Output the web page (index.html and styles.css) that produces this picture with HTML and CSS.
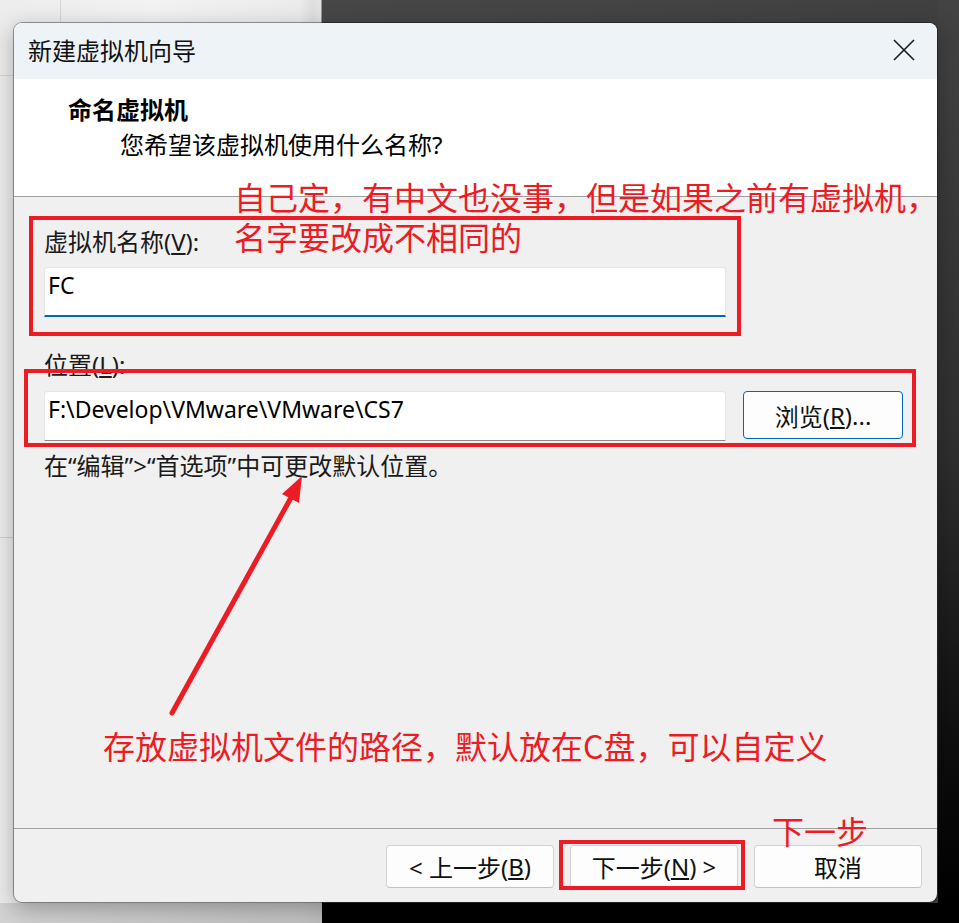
FILE: index.html
```html
<!DOCTYPE html>
<html lang="zh-CN">
<head>
<meta charset="utf-8">
<title>新建虚拟机向导</title>
<link rel="stylesheet" href="styles.css">
</head>
<body>
<div class="dialog">
  <div class="titlebar">
    <span class="title">新建虚拟机向导</span>
    <svg class="close" width="22" height="22" viewBox="0 0 22 22"><path d="M1 1 L21 21 M21 1 L1 21" stroke="#1a1a1a" stroke-width="1.6" fill="none"/></svg>
  </div>
  <div class="header">
    <div class="h-title">命名虚拟机</div>
    <div class="h-sub">您希望该虚拟机使用什么名称?</div>
  </div>
  <div class="content">
    <div class="label">虚拟机名称(<u>V</u>):</div>
    <div class="input focused">FC</div>
    <div class="label label2">位置(<u>L</u>):</div>
    <div class="row">
      <div class="input">F:\Develop\VMware\VMware\CS7</div>
      <div class="btn browse">浏览(<u>R</u>)...</div>
    </div>
    <div class="hint">在“编辑”&gt;“首选项”中可更改默认位置。</div>
  </div>
  <div class="footer">
    <div class="btn">&lt; 上一步(<u>B</u>)</div>
    <div class="btn">下一步(<u>N</u>) &gt;</div>
    <div class="btn">取消</div>
  </div>
</div>

<div class="ann ann1">自己定，有中文也没事，但是如果之前有虚拟机，<br>名字要改成不相同的</div>
<div class="ann ann2">存放虚拟机文件的路径，默认放在C盘，可以自定义</div>
<div class="ann ann3">下一步</div>
<div class="box box1"></div>
<div class="box box2"></div>
<div class="box box3"></div>
<svg class="arrow" width="959" height="923" viewBox="0 0 959 923">
  <line x1="172" y1="713" x2="293" y2="494" stroke="#ed1c24" stroke-width="5" stroke-linecap="round"/>
  <polygon points="302,476 299,503 282,494" fill="#ed1c24"/>
</svg>
</body>
</html>
```
FILE: styles.css
```css
html, body {
  margin: 0;
  padding: 0;
}
body {
  width: 959px;
  height: 923px;
  overflow: hidden;
  position: relative;
  font-family: "Noto Sans", "Noto Sans CJK SC", sans-serif;
  color: #111;
  background:
    linear-gradient(to right, #d2d2d2, #c2c2c2 300px, #bdbdbd 322px, #000 322px) 0 903px / 100% 20px no-repeat,
    linear-gradient(#d6d6d6, #d6d6d6) 60px 0 / 1px 22px no-repeat,
    linear-gradient(#c8c8c8, #c8c8c8) 60px 903px / 1px 20px no-repeat,
    linear-gradient(#d6d6d6, #d6d6d6) 0 75px / 13px 1px no-repeat,
    linear-gradient(#d0d0d0, #d0d0d0) 0 537px / 13px 1px no-repeat,
    linear-gradient(#434343, #2e2e2e 50%, #0a0a0a 85%, #000) 938px 0 / 21px 100% no-repeat,
    linear-gradient(to right, #ececec 0, #f2f2f2 150px, #ebebeb 300px, #dedede 312px, #e4e4e4 321px, #474747 322px, #404040 100%);
}

.dialog {
  margin: 22px 0 0 13px;
  width: 925px;
  height: 881px;
  box-sizing: border-box;
  border: 1px solid rgba(0, 0, 0, 0.36);
  border-radius: 9px;
  background: #f0f0f0;
  background-clip: padding-box;
  box-shadow: 0 6px 22px rgba(0, 0, 0, 0.28);
  display: flex;
  flex-direction: column;
  overflow: hidden;
}

.titlebar {
  height: 56px;
  flex: none;
  background: #eef3f8;
  display: flex;
  align-items: center;
  justify-content: space-between;
  padding: 0 22px 0 14px;
}
.title {
  font-size: 24px;
  line-height: 32px;
  color: #111;
}
.close {
  display: block;
  margin-top: -2px;
}

.header {
  height: 118px;
  flex: none;
  background: #fff;
  border-bottom: 1px solid #a0a0a0;
  padding: 14px 0 0 54px;
  box-sizing: border-box;
}
.h-title {
  font-family: "Noto Sans CJK SC", sans-serif;
  font-weight: 700;
  font-size: 24px;
  line-height: 32px;
  color: #000;
}
.h-sub {
  margin-top: 4px;
  padding-left: 52px;
  font-size: 24px;
  line-height: 32px;
  color: #000;
}

.content {
  flex: 1;
  padding: 29px 0 0 30px;
  display: flex;
  flex-direction: column;
  align-items: flex-start;
}
.label {
  font-size: 24px;
  line-height: 32px;
  color: #1a1a1a;
}
.label2 {
  margin-top: 32px;
}
.input {
  margin-top: 9px;
  width: 682px;
  height: 50px;
  box-sizing: border-box;
  background: #fff;
  border: 1px solid #e6e6e6;
  border-bottom: 1px solid #8a8a8a;
  border-radius: 3px 3px 0 0;
  padding: 1px 3px 0;
  font-size: 23px;
  line-height: 32px;
  color: #000;
}
.input.focused {
  border-bottom: 2px solid #0067c0;
}
.row {
  display: flex;
  align-items: flex-start;
  gap: 17px;
  margin-top: 10px;
}
.row .input {
  margin-top: 0;
}
.hint {
  margin-top: 9px;
  font-size: 24px;
  line-height: 32px;
  color: #1a1a1a;
}

.btn {
  width: 168px;
  height: 43px;
  box-sizing: border-box;
  background: #fdfdfd;
  border: 1px solid #d2d2d2;
  border-bottom-color: #c2c2c2;
  border-radius: 4px;
  display: flex;
  align-items: center;
  justify-content: center;
  font-size: 24px;
  color: #111;
}
.btn.browse {
  width: 160px;
  height: 48px;
  border: 1px solid #0067c0;
}

.footer {
  height: 74px;
  flex: none;
  box-sizing: border-box;
  border-top: 1px solid #a0a0a0;
  padding: 16px 15px 0 0;
  display: flex;
  justify-content: flex-end;
  gap: 16px;
}

.ann {
  position: absolute;
  color: #ed1c24;
  font-family: "Noto Sans CJK SC", sans-serif;
  font-size: 32px;
  line-height: 40px;
  white-space: nowrap;
}
.ann1 { left: 234px; top: 176px; }
.ann2 { left: 103px; top: 725px; }
.ann3 { left: 772px; top: 810px; }

.box {
  position: absolute;
  border: 4px solid #ed1c24;
  box-sizing: border-box;
}
.box1 { left: 29px; top: 216px; width: 712px; height: 120px; }
.box2 { left: 24px; top: 369px; width: 892px; height: 78px; }
.box3 { left: 559px; top: 840px; width: 186px; height: 50px; }

.arrow {
  position: absolute;
  left: 0;
  top: 0;
  pointer-events: none;
}
```
